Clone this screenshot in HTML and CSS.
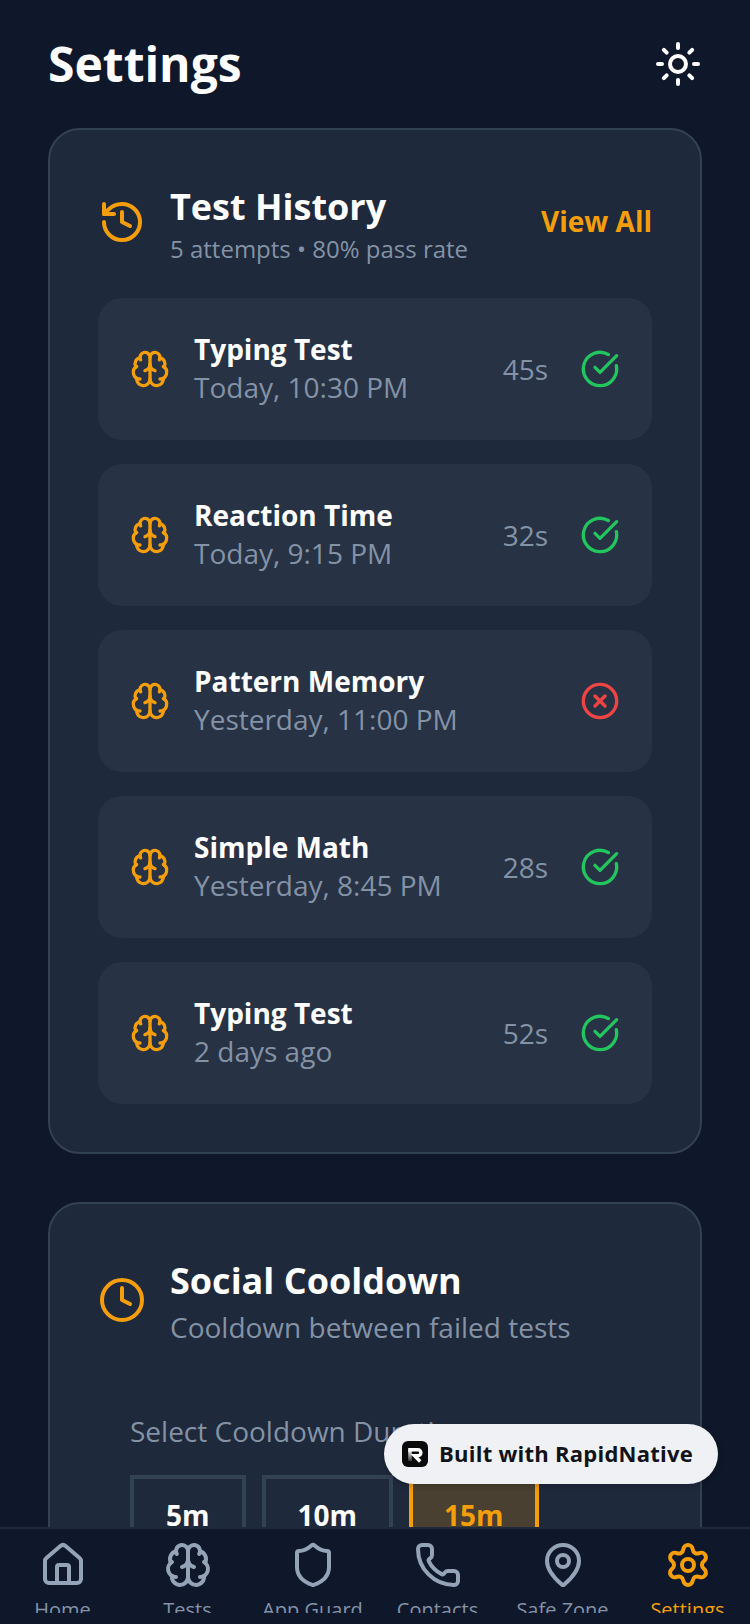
FILE: index.html
```html
<!DOCTYPE html>
<html lang="en">
<head>
<meta charset="utf-8">
<title>Settings</title>
<link rel="stylesheet" href="styles.css">
</head>
<body>
<svg class="defs" aria-hidden="true">
  <symbol id="brain" viewBox="0 0 24 24"><path d="M12 18V5"/><path d="M15 13a4.17 4.17 0 0 1-3-4 4.17 4.17 0 0 1-3 4"/><path d="M17.598 6.5A3 3 0 1 0 12 5a3 3 0 1 0-5.598 1.5"/><path d="M17.997 5.125a4 4 0 0 1 2.526 5.77"/><path d="M18 18a4 4 0 0 0 2-7.464"/><path d="M19.967 17.483A4 4 0 1 1 12 18a4 4 0 1 1-7.967-.517"/><path d="M6 18a4 4 0 0 1-2-7.464"/><path d="M6.003 5.125a4 4 0 0 0-2.526 5.77"/></symbol>
  <symbol id="check" viewBox="0 0 24 24"><path d="M21.801 10A10 10 0 1 1 17 3.335"/><path d="m9 11 3 3L22 4"/></symbol>
  <symbol id="cross" viewBox="0 0 24 24"><circle cx="12" cy="12" r="10"/><path d="m15 9-6 6"/><path d="m9 9 6 6"/></symbol>
</svg>
<div class="screen">
  <main class="content">
    <header class="top">
      <h1 class="page-title">Settings</h1>
      <svg class="icon i48 white" viewBox="0 0 24 24"><circle cx="12" cy="12" r="4"/><path d="M12 2v2"/><path d="M12 20v2"/><path d="m4.93 4.93 1.41 1.41"/><path d="m17.66 17.66 1.41 1.41"/><path d="M2 12h2"/><path d="M20 12h2"/><path d="m6.34 17.66-1.41 1.41"/><path d="m19.07 4.93-1.41 1.41"/></svg>
    </header>

    <section class="card">
      <div class="card-head">
        <svg class="icon i48 amber" viewBox="0 0 24 24"><path d="M3 12a9 9 0 1 0 9-9 9.75 9.75 0 0 0-6.74 2.74L3 8"/><path d="M3 3v5h5"/><path d="M12 7v5l4 2"/></svg>
        <div class="head-text">
          <h2 class="card-title">Test History</h2>
          <p class="card-sub small">5 attempts • 80% pass rate</p>
        </div>
        <span class="view-all">View All</span>
      </div>
      <div class="rows">
        <div class="row">
          <svg class="icon i40 amber"><use href="#brain"/></svg>
          <div class="row-text"><div class="row-title">Typing Test</div><div class="row-sub">Today, 10:30 PM</div></div>
          <span class="dur">45s</span>
          <svg class="icon i40 green"><use href="#check"/></svg>
        </div>
        <div class="row">
          <svg class="icon i40 amber"><use href="#brain"/></svg>
          <div class="row-text"><div class="row-title">Reaction Time</div><div class="row-sub">Today, 9:15 PM</div></div>
          <span class="dur">32s</span>
          <svg class="icon i40 green"><use href="#check"/></svg>
        </div>
        <div class="row">
          <svg class="icon i40 amber"><use href="#brain"/></svg>
          <div class="row-text"><div class="row-title">Pattern Memory</div><div class="row-sub">Yesterday, 11:00 PM</div></div>
          <svg class="icon i40 red"><use href="#cross"/></svg>
        </div>
        <div class="row">
          <svg class="icon i40 amber"><use href="#brain"/></svg>
          <div class="row-text"><div class="row-title">Simple Math</div><div class="row-sub">Yesterday, 8:45 PM</div></div>
          <span class="dur">28s</span>
          <svg class="icon i40 green"><use href="#check"/></svg>
        </div>
        <div class="row">
          <svg class="icon i40 amber"><use href="#brain"/></svg>
          <div class="row-text"><div class="row-title">Typing Test</div><div class="row-sub">2 days ago</div></div>
          <span class="dur">52s</span>
          <svg class="icon i40 green"><use href="#check"/></svg>
        </div>
      </div>
    </section>

    <section class="card">
      <div class="card-head">
        <svg class="icon i48 amber" viewBox="0 0 24 24"><circle cx="12" cy="12" r="10"/><path d="M12 6v6l4 2"/></svg>
        <div class="head-text">
          <h2 class="card-title">Social Cooldown</h2>
          <p class="card-sub">Cooldown between failed tests</p>
        </div>
      </div>
      <div class="cooldown">
        <div class="select-label">Select Cooldown Duration</div>
        <div class="durations">
          <div class="chip">5m</div>
          <div class="chip">10m</div>
          <div class="chip active">15m</div>
        </div>
      </div>
    </section>
  </main>

  <nav class="tabs">
    <div class="tab">
      <svg class="icon i48" viewBox="0 0 24 24"><path d="M15 21v-8a1 1 0 0 0-1-1h-4a1 1 0 0 0-1 1v8"/><path d="M3 10a2 2 0 0 1 .709-1.528l7-5.999a2 2 0 0 1 2.582 0l7 5.999A2 2 0 0 1 21 10v9a2 2 0 0 1-2 2H5a2 2 0 0 1-2-2z"/></svg>
      <span class="tab-label">Home</span>
    </div>
    <div class="tab">
      <svg class="icon i48"><use href="#brain"/></svg>
      <span class="tab-label">Tests</span>
    </div>
    <div class="tab">
      <svg class="icon i48" viewBox="0 0 24 24"><path d="M20 13c0 5-3.5 7.500-7.660 8.950a1 1 0 0 1-.670-.010C7.500 20.500 4 18 4 13V6a1 1 0 0 1 1-1c2 0 4.500-1.200 6.240-2.720a1.170 1.170 0 0 1 1.520 0C14.510 3.810 17 5 19 5a1 1 0 0 1 1 1z"/></svg>
      <span class="tab-label">App Guard</span>
    </div>
    <div class="tab">
      <svg class="icon i48" viewBox="0 0 24 24"><path d="M13.832 16.568a1 1 0 0 0 1.213-.303l.355-.465A2 2 0 0 1 17 15h3a2 2 0 0 1 2 2v3a2 2 0 0 1-2 2A18 18 0 0 1 2 4a2 2 0 0 1 2-2h3a2 2 0 0 1 2 2v3a2 2 0 0 1-.8 1.600l-.468.351a1 1 0 0 0-.292 1.233 14 14 0 0 0 6.392 6.384"/></svg>
      <span class="tab-label">Contacts</span>
    </div>
    <div class="tab">
      <svg class="icon i48" viewBox="0 0 24 24"><path d="M20 10c0 4.993-5.539 10.193-7.399 11.799a1 1 0 0 1-1.202 0C9.539 20.193 4 14.993 4 10a8 8 0 0 1 16 0"/><circle cx="12" cy="10" r="3"/></svg>
      <span class="tab-label">Safe Zone</span>
    </div>
    <div class="tab current">
      <svg class="icon i48" viewBox="0 0 24 24"><path d="M9.671 4.136a2.340 2.340 0 0 1 4.659 0 2.340 2.340 0 0 0 3.319 1.915 2.340 2.340 0 0 1 2.330 4.033 2.340 2.340 0 0 0 0 3.831 2.340 2.340 0 0 1-2.330 4.033 2.340 2.340 0 0 0-3.319 1.915 2.340 2.340 0 0 1-4.659 0 2.340 2.340 0 0 0-3.320-1.915 2.340 2.340 0 0 1-2.330-4.033 2.340 2.340 0 0 0 0-3.831A2.340 2.340 0 0 1 6.350 6.051a2.340 2.340 0 0 0 3.319-1.915"/><circle cx="12" cy="12" r="3"/></svg>
      <span class="tab-label">Settings</span>
    </div>
  </nav>

  <div class="badge">
    <svg class="badge-logo" viewBox="0 0 26 26"><defs><linearGradient id="rg" gradientUnits="userSpaceOnUse" x1="0" y1="9" x2="0" y2="21"><stop offset="0" stop-color="#fff"/><stop offset="1" stop-color="#2a2a2c"/></linearGradient></defs><rect width="26" height="26" rx="6" fill="#0b0b0c"/><path d="M8 20V9" fill="none" stroke="url(#rg)" stroke-width="3.600"/><path d="M6.200 8.800H16a2.900 2.900 0 0 1 0 5.800H12.500L18.200 20.500" fill="none" stroke="#fff" stroke-width="3.400"/></svg>
    <span class="badge-text">Built with RapidNative</span>
  </div>
</div>
</body>
</html>
```
FILE: styles.css
```css
* { box-sizing: border-box; }
html, body { margin: 0; padding: 0; height: 100%; }
body { background: #0f172a; font-family: "Open Sans", "Noto Sans", sans-serif; color: #fff; overflow: hidden; }
.defs { display: none; }
.screen { position: relative; width: 750px; height: 1624px; display: flex; flex-direction: column; overflow: hidden; background: #0f172a; }
.content { flex: 1 1 0; min-height: 0; overflow: hidden; padding: 32px 48px 0; }

.icon { flex: none; fill: none; stroke: currentColor; stroke-width: 2; stroke-linecap: round; stroke-linejoin: round; display: block; }
.i48 { width: 48px; height: 48px; }
.i40 { width: 40px; height: 40px; }
.white { color: #fff; }
.amber { color: #f59e0b; }
.green { color: #22c55e; }
.red { color: #ef4444; }

.top { display: flex; justify-content: space-between; align-items: center; height: 64px; margin-bottom: 32px; }
.page-title { margin: 0; font-size: 48px; line-height: 64px; font-weight: 700; }

.card { background: #1e293b; border: 2px solid #334155; border-radius: 32px; padding: 48px; margin-bottom: 48px; }
.card-head { display: flex; align-items: center; gap: 24px; }
.head-text { flex: 1; min-width: 0; }
.card-title { margin: 0; font-size: 36px; line-height: 58px; font-weight: 700; }
.card-sub { margin: -3px 0 0; font-size: 28px; line-height: 40px; color: #8492a6; }
.card-sub.small { font-size: 24px; line-height: 32px; }
.view-all { font-size: 28px; font-weight: 700; color: #f59e0b; margin-bottom: 2px; }

.rows { display: flex; flex-direction: column; gap: 24px; margin-top: 33px; }
.row { display: flex; align-items: center; gap: 24px; height: 142px; padding: 0 32px; border-radius: 24px; background: #273244; }
.row-text { flex: 1; min-width: 0; margin-bottom: 2px; }
.row-title { font-size: 28px; line-height: 38px; font-weight: 700; }
.row-sub { font-size: 28px; line-height: 38px; color: #8492a6; }
.dur { font-size: 28px; line-height: 38px; color: #8492a6; margin-right: 8px; }

.cooldown { padding: 32px; margin-top: 32px; }
.select-label { font-size: 28px; line-height: 40px; color: #8492a6; margin-bottom: 24px; }
.durations { display: flex; gap: 16px; }
.chip { border: 4px solid #334155; padding: 16px 32px; font-size: 28px; line-height: 40px; font-weight: 700; }
.chip.active { border-color: #f59e0b; background: rgba(245, 158, 11, 0.2); color: #f59e0b; padding: 16px 31px; }

.tabs { flex: none; display: grid; grid-template-columns: repeat(6, 1fr); background: #0f172a; border-top: 2px solid #1e293b; padding: 12px 0 11px; position: relative; }
.tab { display: flex; flex-direction: column; align-items: center; color: #94a3b8; }
.tab.current { color: #f59e0b; }
.tab-label { display: block; margin-top: 7px; height: 17px; overflow: hidden; font-size: 20px; line-height: 27px; white-space: nowrap; color: #8492a6; }
.tab.current .tab-label { color: #f59e0b; }

.badge { position: absolute; left: 384px; top: 1424px; width: 334px; height: 60px; border-radius: 30px; background: #f0f1f4; display: flex; align-items: center; gap: 11px; padding-left: 18px; box-shadow: 0 2px 6px rgba(0, 0, 0, 0.2); }
.badge-logo { width: 26px; height: 26px; flex: none; }
.badge-text { font-size: 22px; font-weight: 700; letter-spacing: 0.25px; color: #111318; white-space: nowrap; margin-bottom: 2px; }
```
